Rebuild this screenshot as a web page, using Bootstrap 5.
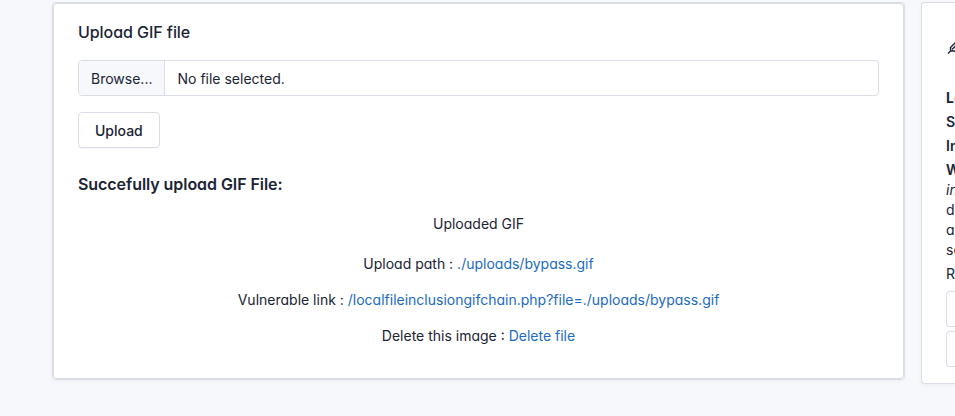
<!DOCTYPE html>
<html lang="en">
<head>
<meta charset="utf-8">
<meta name="viewport" content="width=device-width, initial-scale=1">
<title>Upload GIF file</title>
<link href="https://cdn.jsdelivr.net/npm/bootstrap@5.3.0/dist/css/bootstrap.min.css" rel="stylesheet">
<style>
body{font-family:Inter,"Liberation Sans",sans-serif;font-size:14px;line-height:20px;color:#1a2434;background:#f6f8fb;font-feature-settings:"cv03","cv04","cv11";height:416px}
.page-row{padding:2px 0 0 52px;gap:16px}
.panel{background:#fff;border:1px solid #dadde5;border-radius:4px;box-shadow:rgba(30,41,59,.04) 0 2px 4px 0}
.upload-panel{width:853px;height:378px}
.upload-inner{height:100%;padding:16px 24px;box-shadow:none}
.info-panel{width:34px;height:382px;padding:35px 0 0 24px;border-right:0;border-radius:4px 0 0 4px;white-space:nowrap}
h3{font-size:16px;line-height:24px;margin:0;letter-spacing:-.06px;font-weight:500}
.file-field{height:36px;border:1px solid #dadde5;border-radius:4px;margin-top:16px}
.file-button{background:#f6f8fb;border-right:1px solid #dadde5;padding:8px 12px 6px;width:86px}
.file-name{padding:8px 12px 6px 12.5px}
.btn-plain{height:36px;padding:8px 16px 6px;border:1px solid #dadde5;border-radius:4px;background:#fff;color:#1a2434;font-size:14px;line-height:20px;font-weight:500;font-feature-settings:normal;margin-top:16px;box-shadow:0 1px 0 rgba(30,41,59,.04)}
.result-title{margin-top:24px}
.result{margin-top:18px}
.result a{color:#206bc4}
.result p{margin:0 0 16px}
.result .first-line{margin-bottom:20px}
.info-icon{display:block;margin-bottom:30px}
.info-panel .info-line{margin-bottom:4px}
.info-panel .resources{margin-bottom:7px}
.info-button{height:36px;border:1px solid #dadde5;border-right:0;border-radius:4px 0 0 4px;margin-bottom:4px}
</style>
</head>
<body class="overflow-hidden">
<main class="page-row d-flex align-items-start">
  <section class="panel upload-panel flex-shrink-0">
    <div class="panel upload-inner">
      <h3>Upload GIF file</h3>
      <div class="file-field d-flex overflow-hidden">
        <div class="file-button flex-shrink-0">Browse...</div>
        <div class="file-name">No file selected.</div>
      </div>
      <button class="btn btn-plain" type="button">Upload</button>
      <h3 class="result-title fw-semibold">Succefully upload GIF File:</h3>
      <div class="result text-center">
        <p class="first-line">Uploaded GIF</p>
        <p>Upload path : <a class="text-decoration-none" href="#">./uploads/bypass.gif</a></p>
        <p>Vulnerable link : <a class="text-decoration-none" href="#">/localfileinclusiongifchain.php?file=./uploads/bypass.gif</a></p>
        <p>Delete this image : <a class="text-decoration-none" href="#">Delete file</a></p>
      </div>
    </div>
  </section>
  <aside class="panel info-panel flex-shrink-0 overflow-hidden">
    <svg class="info-icon" width="20" height="20" viewBox="0 0 20 20" fill="none" stroke="currentColor" stroke-width="1.4"><path d="M2 15.500L5 12.500M4.500 13V9.500L9.500 4.500M4.500 13h7l4-4M6 11.500L10 7.500"/></svg>
    <div class="info-line fw-bold">L<span class="fw-normal">e</span></div>
    <div class="info-line fw-semibold">S</div>
    <div class="info-line fw-semibold">In</div>
    <div class="fw-semibold">W</div>
    <div class="fst-italic">in</div>
    <div>d</div>
    <div>a</div>
    <div class="info-line">se</div>
    <div class="resources">R</div>
    <div class="info-button"></div>
    <div class="info-button"></div>
  </aside>
</main>
</body>
</html>
